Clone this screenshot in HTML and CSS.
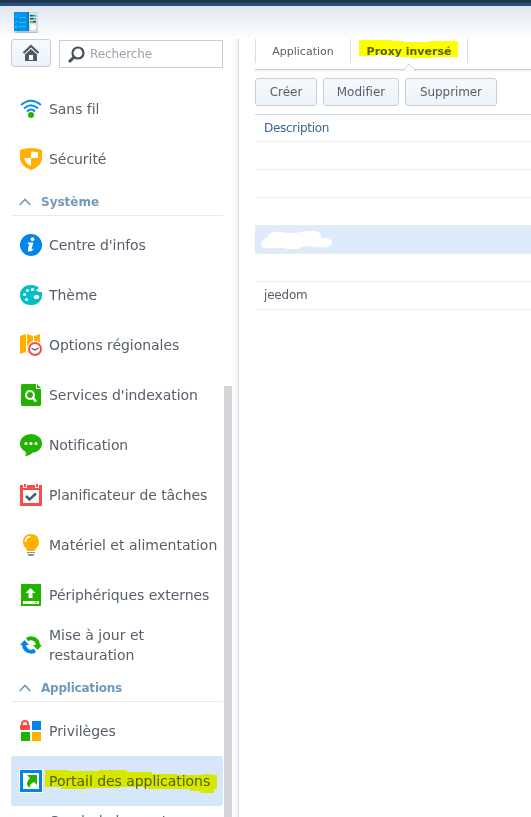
FILE: index.html
```html
<!DOCTYPE html>
<html lang="fr">
<head>
<meta charset="utf-8">
<title>Panneau de configuration</title>
<link rel="stylesheet" href="styles.css">
</head>
<body>
<div class="desktop-bar"></div>
<header class="titlebar">
<svg class="app-icon" width="24" height="21" viewBox="0 0 24 21"><path fill="#b9c1c6" d="M1 19h23v2H1z"/><path fill="#0096ee" d="M0 0h14v19H0z"/><path fill="#007fcb" d="M13 0h2v19h-2z"/><path fill="#d5dce0" d="M15 0h9v20h-9z"/><path stroke="#35b5f4" fill="none" d="M1 4l1 1 1-2M5 5.500h7M1 10l1 1 1-2M5 10.500h7M5 14.500h7"/><path fill="#35b5f4" d="M1 14h2v2H1z"/><path fill="#37424b" d="M16 3h3v1.500h-3zM16 6h3v1.500h-3zM19 9h3v1.500h-3z"/><path fill="#14b9e8" d="M19 3h3v1.500h-3zM19 6h3v1.500h-3z"/><path fill="#80c900" d="M16 9h3v2h-3z"/><circle cx="19" cy="15" r="3" fill="#fff"/></svg>
</header>
<div class="window">
<aside class="sidebar">
<div class="tools">
<button class="home" aria-label="Accueil"><svg width="18" height="18" viewBox="0 0 18 18"><path fill="none" stroke="#4e5966" stroke-width="2.200" d="M1.500 9L9 2l7.500 7"/><path fill="#4e5966" d="M9 5l6 5.500V17H3v-6.500z"/><path fill="#fff" d="M7 11h4v5H7z"/></svg></button>
<div class="search"><svg width="17" height="17" viewBox="0 0 17 17" fill="none" stroke="#46515b"><circle cx="10" cy="7" r="5.500" stroke-width="2.200"/><path stroke-width="3" d="M6 11l-5 5"/></svg><span>Recherche</span></div>
</div>
<nav>
<div class="item"><svg width="22" height="22" viewBox="0 0 22 22" fill="none" stroke="#0b8ce9" stroke-width="2"><path d="M1 7Q11-1.500 21 7M4 10.500Q11 4 18 10.500M7 13.500Q11 9.500 15 13.500"/><circle cx="11" cy="17" r="3" fill="#21b300" stroke="none"/></svg><span>Sans fil</span></div>
<div class="item"><svg width="22" height="22" viewBox="0 0 22 22"><path fill="#ffb000" d="M0 2Q11-2 22 2v8q0 8-11 12Q0 18 0 10z"/><path fill="#fff" d="M11 3.500q4 0 7 1V10h-7zM4 10h7v8q-6-3-7-8z"/></svg><span>Sécurité</span></div>
<div class="group"><svg width="12" height="8" viewBox="0 0 12 8"><path d="M.7 7L6 1.500 11.300 7"/></svg><b>Système</b></div>
<div class="item"><svg width="22" height="22" viewBox="0 0 22 22"><circle cx="11" cy="11" r="11" fill="#0086ea"/><circle cx="12.500" cy="5.200" r="1.900" fill="#fff"/><path fill="#fff" d="M8 8.500h5.500l-2 6.500q0 1 2-.5l.3.700Q11 18 9 17.500q-1.700-.500-1-3L9.300 10H7.500z"/></svg><span>Centre d'infos</span></div>
<div class="item"><svg width="22" height="22" viewBox="0 0 22 22"><path fill="#00bfc2" d="M11 1c4 0 7 1.500 8 3l-3 2q1 2 6 2c1 8-4 13-11 13C4 21 0 16.500 0 11S4 1 11 1z"/><g fill="#fff"><circle cx="4.500" cy="10.500" r="1.600"/><circle cx="7.500" cy="6.500" r="1.600"/><circle cx="12.500" cy="5.500" r="1.600"/><circle cx="6.500" cy="15.500" r="1.600"/><ellipse cx="16.500" cy="13" rx="2.800" ry="2"/></g></svg><span>Thème</span></div>
<div class="item"><svg width="22" height="22" viewBox="0 0 22 22"><path fill="#ffb000" d="M0 2l6-2v18l-6 2zM7 0l6 2v18l-6-2zM14 2l6-2v18h-6z"/><circle cx="15" cy="15" r="8" fill="#fff"/><circle cx="15" cy="15" r="6" fill="#fff" stroke="#fa4c4c" stroke-width="2"/><path fill="none" stroke="#505a64" stroke-width="1.300" d="M11.500 14l3.500 2 3.500-2"/></svg><span>Options régionales</span></div>
<div class="item"><svg width="22" height="22" viewBox="0 0 22 22"><path fill="#21b300" d="M2 0h14v5h5v16l-1 1H2l-1-1V1z"/><path fill="#21b300" d="M17 0l4 4h-4z"/><circle cx="10" cy="11" r="4" fill="none" stroke="#fff" stroke-width="2.200"/><path stroke="#fff" stroke-width="2.500" d="M13 14l3 3.500"/></svg><span>Services d'indexation</span></div>
<div class="item"><svg width="22" height="22" viewBox="0 0 22 22"><ellipse cx="11" cy="9.500" rx="11" ry="9.500" fill="#21b300"/><path fill="#21b300" d="M5 17q2 3 0 5 5 0 8-4z"/><g fill="#fff"><circle cx="6" cy="9.500" r="1.600"/><circle cx="11" cy="9.500" r="1.600"/><circle cx="16" cy="9.500" r="1.600"/></g></svg><span class="snug">Notification</span></div>
<div class="item"><svg width="22" height="22" viewBox="0 0 22 22"><path fill="#fa4c4c" d="M0 1h22v21H0z"/><path fill="#fff" d="M3 6h16v13H3zM3 0h4v4H3zM15 0h4v4h-4z"/><path fill="#fa4c4c" d="M4 0h2v3H4zM16 0h2v3h-2z"/><path fill="none" stroke="#4e5966" stroke-width="2.500" d="M6 12l3.500 3.500 6.500-6"/></svg><span class="snug">Planificateur de tâches</span></div>
<div class="item"><svg width="22" height="22" viewBox="0 0 22 22"><path fill="#ffb000" d="M11 0c5 0 8 3.500 8 8 0 5-4 6-4 9H7c0-3-4-4-4-9 0-4.500 3-8 8-8z"/><path fill="none" stroke="#fff" stroke-width="1.500" d="M5.500 8q0-5 5-5.500"/><path fill="#8d959c" d="M7 18h8v1H7zM7 20h8l-2 2H9z"/></svg><span class="natural">Matériel et alimentation</span></div>
<div class="item"><svg width="22" height="22" viewBox="0 0 22 22"><path fill="#21b300" d="M1 0h20v22H1z"/><path fill="#fff" d="M10.500 4l5 5H12.500v5h-4V9h-3zM3 17h16v3H3z"/><path fill="#ffb000" d="M15 18h2v1h-2z"/></svg><span>Périphériques externes</span></div>
<div class="item"><svg width="22" height="22" viewBox="0 0 22 22"><g fill="none" stroke-width="4"><path stroke="#21b300" d="M7 5.500Q11 3 15 5.500q3 2 3 6"/><path stroke="#0086ea" d="M4 10q0 5 4 7 4 1.500 7-.5"/></g><path fill="#21b300" d="M13 11h9l-4.500 5z"/><path fill="#0086ea" d="M0 11h9L4.500 6z"/></svg><span class="natural">Mise à jour et restauration</span></div>
<div class="group"><svg width="12" height="8" viewBox="0 0 12 8"><path d="M.7 7L6 1.500 11.300 7"/></svg><b class="tight">Applications</b></div>
<div class="item"><svg width="22" height="22" viewBox="0 0 22 22"><path fill="#fa4c4c" d="M0 5h10v5H1L0 9z"/><path fill="none" stroke="#fa4c4c" stroke-width="2" d="M2 6V4q0-3 3-3t3 3v2"/><path fill="#0086ea" d="M12 1h9v9h-9z"/><path fill="#21b300" d="M1 12h9v9H1z"/><path fill="#ffb000" d="M12 12h9v9h-9z"/></svg><span>Privilèges</span></div>
<div class="item selected"><svg class="framed" width="22" height="22" viewBox="0 0 22 22"><path fill="#fff" stroke="#0086ea" stroke-width="3" d="M1.500 1.500h19v19h-19z"/><path fill="#21b300" d="M7 5h10v10l-3-3q-5 2-4 6-6-4 0-10z"/></svg><span>Portail des applications</span>
<svg class="marker" width="173" height="24" viewBox="0 0 173 24"><path d="M0 0h24v1h30V0h28v2h25v2h25v1h26v-1h8v1h6v14h-3v4h-13v-2h-11v-2h-42v-2H75v1H41v1H16v-2H0z"/></svg></div>
<div class="item"><i></i><span>Cond. de base et paramètres</span></div>
</nav>
<div class="scrollbar"></div>
</aside>
<main>
<div class="tabs"><div class="tab">Application</div><div class="tab active">Proxy inversé
<svg class="marker" width="99" height="20" viewBox="0 0 99 20"><path d="M0 0h32l1 1h11v1h26V1h29v16H73v1H51v-1H40v-1H28v-1H17v1H0z"/></svg>
<svg class="notch" width="14" height="8" viewBox="0 0 14 8"><path d="M0 7.500h1L7 1l6 6.500h1"/></svg></div></div>
<div class="actions"><button class="create">Créer</button><button class="edit">Modifier</button><button class="delete">Supprimer</button></div>
<div class="grid"><div class="head">Description</div><div class="row"></div><div class="row"></div><div class="row"></div>
<div class="row chosen"><svg width="72" height="18" viewBox="0 0 72 18"><path fill="#fff" d="M5 7.500Q7 6 8 3q6-3.500 15-1.500 10 1 17-.5 9-2 16-.5 4 1 4 6.500 11-.5 11 4.500-1 5-9 5-8 0-15-1.500l-6 .5q-2 3-9 2.500-7 0-10-1.500-8 1-17 .5-5 0-5-4 0-4 5-5.500"/></svg></div>
<div class="row"></div><div class="row">jeedom</div></div>
</main>
</div>
</body>
</html>
```
FILE: styles.css
```css
* { box-sizing: border-box; }
body { margin: 0; width: 531px; height: 817px; overflow: hidden; background: #fff; color: #57606a; font: 12px "DejaVu Sans", Verdana, sans-serif; font-variant-ligatures: none; }
.desktop-bar { height: 6px; background: linear-gradient(#20364b 0 3px, #275286 3px 6px); }
.titlebar { height: 33px; padding: 6px 14px; background: linear-gradient(#dfe6f0, #fff); }
svg { display: block; flex: none; }
.window { display: flex; height: 778px; overflow: hidden; }
.sidebar { position: relative; width: 239px; flex: none; padding: 0 15px 0 11px; border-right: 1px solid #d8dadc; box-shadow: inset -2px 0 1px #f5f5f5; }
.tools { display: flex; gap: 8px; height: 45px; align-items: flex-start; }
button { display: flex; align-items: center; justify-content: center; height: 28px; padding: 0; color: #57606a; font: inherit; border: 1px solid #c3cfdc; border-radius: 3px; background: linear-gradient(#f7fafd, #edf3f9); }
.home { width: 40px; }
.search { display: flex; align-items: center; gap: 5px; width: 164px; height: 28px; margin-top: 1px; padding-left: 8px; border: 1px solid #c3cfdc; color: #9ba4ae; letter-spacing: -.1px; }
.item { position: relative; display: flex; align-items: center; gap: 7px; width: 212px; height: 50px; padding-left: 9px; font-size: 14px; line-height: 20px; letter-spacing: -.05px; border-radius: 3px; }
.item span { width: 174px; }
.item:nth-last-child(4) span, .item:nth-last-child(5) span { width: 120px; }
.item .natural { letter-spacing: 0; }
.item .snug { letter-spacing: -.1px; }
.item i { width: 22px; }
.selected { background: #d6e7f9; }
.framed { outline: 1px solid #fff; }
.group { display: flex; align-items: center; gap: 10px; height: 32px; width: 212px; margin-bottom: 4px; padding: 4px 0 0 8px; border-bottom: 1px solid #e8eaec; color: #7099ba; }
.group svg { fill: none; stroke: #7099ba; stroke-width: 1.7; }
.tight { letter-spacing: -.22px; }
.scrollbar { position: absolute; left: 224px; top: 347px; width: 8px; height: 431px; background: #d3d5d8; }
main { width: 276px; margin-left: 16px; }
.tabs { display: flex; height: 31px; border-bottom: 1px solid #cfd1d3; box-shadow: 0 1px 1px #eee; }
.tab { position: relative; height: 24px; width: 95px; border-left: 1px solid #d3dee9; text-align: center; line-height: 25px; font-size: 11px; }
.active { width: 118px; border-right: 1px solid #d3dee9; font-weight: bold; }
.marker { position: absolute; fill: #ff0; mix-blend-mode: multiply; }
.item .marker { left: 34px; top: 14px; }
.tab .marker { left: 8px; top: 1px; }
.notch { position: absolute; left: 51px; top: 24px; fill: #fff; stroke: #cfd1d3; }
.actions { display: flex; gap: 6px; padding: 8px 0; }
.create { width: 62px; }
.edit { width: 76px; }
.delete { width: 92px; letter-spacing: -.1px; }
.head, .row { height: 28px; padding-left: 9px; line-height: 27px; letter-spacing: -.2px; border-bottom: 1px solid #ebecee; }
.head { border-top: 1px solid #ccd9e6; color: #3d638f; letter-spacing: -.3px; }
.chosen { padding: 5px 6px; background: #dfebfb; }
```
